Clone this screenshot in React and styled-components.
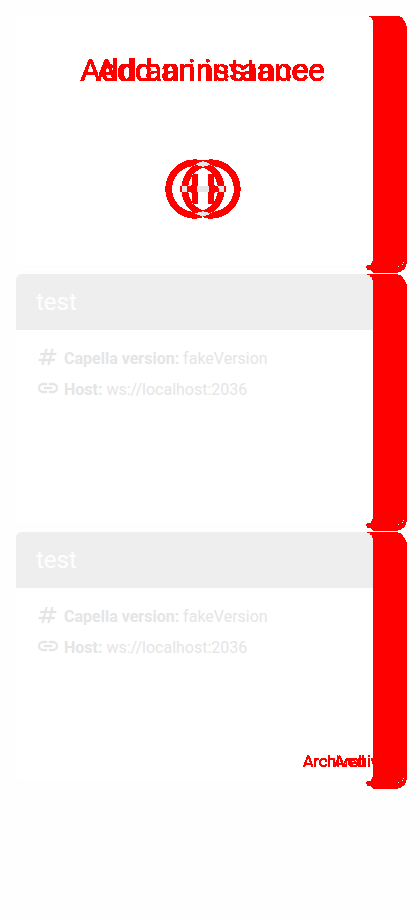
import React from "react";
import styled, { createGlobalStyle } from "styled-components";

const GlobalStyle = createGlobalStyle`
  * { box-sizing: border-box; }
  html { min-height: 100%; background: #fefefe; }
  body { margin: 0; font-family: Roboto, "Liberation Sans", sans-serif; }
`;

const Page = styled.main`
  width: 420px;
  height: 920px;
  padding: 16px;
  display: flex;
  flex-direction: column;
  gap: 8px;
  background: #fefefe;
`;

const Card = styled.section`
  position: relative;
  flex: none;
  width: 357px;
  height: 250px;
  display: flex;
  flex-direction: column;
  background: #fff;
  border-radius: 6px 0 0 6px;
  box-shadow: 0 1px 1px #fcfcfc;
`;

const AddCard = styled(Card)`
  align-items: center;
  padding-top: 36px;
`;

const Title = styled.h1`
  margin: 0;
  font-size: 32px;
  line-height: 36px;
  font-weight: 400;
  color: #f00;
  white-space: nowrap;
  filter: url(#shift-title);
`;

const AddIcon = styled.svg`
  width: 70px;
  height: 70px;
  margin: 65.5px 0 0 0;
  fill: #f00;
  stroke: #f00;
  stroke-width: 0.1;
  filter: url(#shift-icon);
`;

const Header = styled.h2`
  margin: 0;
  height: 56px;
  padding-left: 20px;
  background: #eee;
  border-radius: 6px 0 0 0;
  color: #fefefe;
  font-size: 24px;
  font-weight: 400;
  line-height: 56px;
`;

const Details = styled.div`
  padding: 13px 20px;
`;

const Detail = styled.div`
  display: flex;
  align-items: center;
  gap: 4px;
  height: 31px;
  color: #e5e5e5;
  font-size: 16px;
  white-space: pre;
  b { font-weight: 700; }
`;

const DetailIcon = styled.svg`
  width: 24px;
  height: 24px;
  margin-bottom: 3px;
  fill: currentColor;
  stroke: currentColor;
  stroke-width: 0.2;
`;

const Archived = styled.span`
  align-self: flex-end;
  margin: auto 8px 10px 0;
  font-size: 16px;
  line-height: 20px;
  font-weight: 400;
  color: #f00;
  z-index: 1;
  filter: url(#shift-label);
`;

const EdgeShape = styled.svg`
  position: absolute;
  left: 350px;
  top: 0;
  width: 42px;
  height: 258px;
  fill: #f00;
  shape-rendering: crispEdges;
  pointer-events: none;
`;

// Marks in red what a horizontal move changes. With `solid`, the area that
// both positions cover is red too; otherwise it is light grey.
function ShiftFilter({ id, dx, solid }) {
  return (
    <filter id={id} x="-20%" y="-20%" width="180%" height="140%" colorInterpolationFilters="sRGB">
      <feOffset in="SourceAlpha" dx={dx} dy="0" result="moved" />
      <feComposite in="SourceAlpha" in2="moved" operator="arithmetic" k2="1" k3="-1" result="a" />
      <feComposite in="moved" in2="SourceAlpha" operator="arithmetic" k2="1" k3="-1" result="b" />
      <feComposite in="a" in2="b" operator="arithmetic" k2="1" k3="1" />
      <feComponentTransfer result="mask">
        <feFuncA type="linear" slope="1000" intercept={solid ? -100 : -160} />
      </feComponentTransfer>
      <feFlood floodColor="#f00" />
      <feComposite in2="mask" operator="in" result="changed" />
      <feComposite in="SourceAlpha" in2="moved" operator="in" />
      <feComponentTransfer result="same">
        <feFuncA type="linear" slope={solid ? 1000 : 1} intercept={solid ? -450 : 0} />
      </feComponentTransfer>
      <feFlood floodColor={solid ? "#f00" : "#e5e5e5"} />
      <feComposite in2="same" operator="in" result="shared" />
      <feMerge>
        <feMergeNode in="shared" />
        <feMergeNode in="changed" />
      </feMerge>
    </filter>
  );
}

const FilterSvg = styled.svg`
  position: absolute;
  width: 0;
  height: 0;
`;

function Edge({ first }) {
  const top = first
    ? "M3 0H34V1H36V2H37V4H38V5H39V7H40V10H41"
    : "M1 0H32V1H35V2H36V3H37V5H38V6H39V8H40V10H41";
  const upperLeft = first ? "V4H6V2H5V1H3Z" : "V6H6V3H4V1H1Z";
  return (
    <EdgeShape viewBox="0 0 42 258" aria-hidden="true">
      <path d={`${top}V248H40V251H39V253H38V254H36V255H35V256H32V257H7V256H6V255H5V254H1V252H0V250H1V249H5V247H6V245H7${upperLeft}`} />
      <path fill="#fff" d="M37 246h1v1h-1zM36 248h1v1h-1zM32 250h1v1h-1z" />
    </EdgeShape>
  );
}

function InstanceCard({ archived }) {
  return (
    <Card>
      <Header>test</Header>
      <Details>
        <Detail>
          <DetailIcon viewBox="0 0 24 24"><path d="m20 10 .5-2h-4l1-4h-2l-1 4h-4l1-4h-2l-1 4h-4L4 10h4l-1 4H3l-.5 2h4l-1 4h2l1-4h4l-1 4h2l1-4h4l.5-2h-4l1-4h4zm-7 4H9l1-4h4l-1 4z" /></DetailIcon>
          <span><b>Capella version:</b> fakeVersion</span>
        </Detail>
        <Detail>
          <DetailIcon viewBox="0 0 24 24"><path d="M11 17H7a5 5 0 0 1 0-10h4v2H7a3 3 0 0 0 0 6h4zM8 13v-2h8v2zm5 4v-2h4a3 3 0 0 0 0-6h-4V7h4a5 5 0 0 1 0 10z" /></DetailIcon>
          <span><b>Host:</b> ws://localhost:2036</span>
        </Detail>
      </Details>
      {archived && <Archived>Archived</Archived>}
      <Edge />
    </Card>
  );
}

export default function App() {
  return (
    <>
      <GlobalStyle />
      <FilterSvg aria-hidden="true">
        <defs>
          <ShiftFilter id="shift-title" dx="16" solid />
          <ShiftFilter id="shift-icon" dx="16" />
          <ShiftFilter id="shift-label" dx="31" solid />
        </defs>
      </FilterSvg>
      <Page>
        <AddCard>
          <Title>Add an instance</Title>
          <AddIcon viewBox="0 0 24 24">
            <path d="M13 7h-2v4H7v2h4v4h2v-4h4v-2h-4V7zm-1-5C6.48 2 2 6.48 2 12s4.48 10 10 10 10-4.48 10-10S17.52 2 12 2zm0 18c-4.41 0-8-3.59-8-8s3.59-8 8-8 8 3.59 8 8-3.59 8-8 8z" />
          </AddIcon>
          <Edge first />
        </AddCard>
        <InstanceCard />
        <InstanceCard archived />
      </Page>
    </>
  );
}
